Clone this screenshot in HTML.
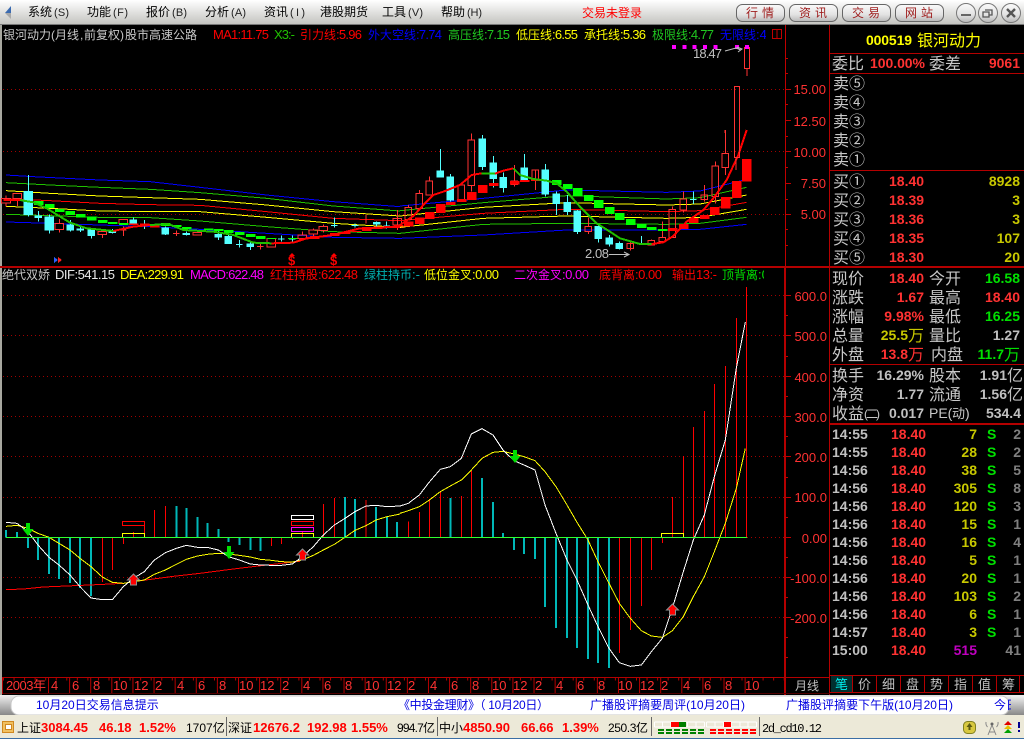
<!DOCTYPE html>
<html><head><meta charset="utf-8"><style>
html,body{margin:0;padding:0;background:#000;width:1024px;height:739px;overflow:hidden}
svg{display:block}
text{font-family:"Liberation Sans","WenQuanYi Zen Hei","Noto Sans CJK SC",sans-serif;font-size:13px;white-space:pre}
.b{font-weight:bold;font-size:14px}
.c{font-size:16px;fill:#c8c8c8}
.e{text-anchor:end}
.m{font-size:12px;fill:#000}
.n{font-size:11px;fill:#222}
.t{font-size:13px;fill:#ff3232}
.a{font-size:13px;fill:#ff3232;text-anchor:end}
.u{font-size:12px;fill:#0000e0}
.h{font-size:12px}
.r{fill:#ff3232}.g{fill:#00e000}.y{fill:#c8c800}.w{fill:#c0c0c0}.k{fill:#808080}
.q{fill:#f00;font-weight:bold;font-size:13px}
.s{font-size:12px;fill:#000}
.d{stroke:#a00000;stroke-dasharray:1 3;stroke-width:1}
</style></head><body>
<svg width="1024" height="739" viewBox="0 0 1024 739" xmlns="http://www.w3.org/2000/svg">
<defs>
<linearGradient id="mb" x1="0" y1="0" x2="0" y2="1"><stop offset="0" stop-color="#fff"/><stop offset="1" stop-color="#c4c4c0"/></linearGradient>
<linearGradient id="bt" x1="0" y1="0" x2="0" y2="1"><stop offset="0" stop-color="#fafafa"/><stop offset=".6" stop-color="#e2e2e2"/><stop offset="1" stop-color="#b8b8b8"/></linearGradient>
<linearGradient id="lg" x1="0" y1="0" x2="0" y2="1"><stop offset="0" stop-color="#f0f0f0"/><stop offset="1" stop-color="#888"/></linearGradient>
<clipPath id="cm"><rect x="0" y="25" width="785" height="242"/></clipPath>
<clipPath id="c1"><rect x="0" y="25" width="766" height="20"/></clipPath>
<clipPath id="c2"><rect x="0" y="267" width="764" height="16"/></clipPath>
<clipPath id="cl"><rect x="0" y="268" width="785" height="409"/></clipPath>
</defs>
<rect width="1024" height="739" fill="#000"/>

<!-- menu bar -->
<rect width="1024" height="24" fill="url(#mb)"/>
<rect y="24" width="1024" height="1" fill="#777"/>
<path d="M11 6L5 13L11 13Z" fill="#3a6ab0"/><path d="M5 13L11 19L11 13Z" fill="#a8a8a8"/>
<text class="m" x="28" y="16">系统</text><text class="n" x="54" y="16" textLength="15">(S)</text>
<text class="m" x="87" y="16">功能</text><text class="n" x="113" y="16" textLength="15">(F)</text>
<text class="m" x="146" y="16">报价</text><text class="n" x="172" y="16" textLength="15">(B)</text>
<text class="m" x="205" y="16">分析</text><text class="n" x="231" y="16" textLength="15">(A)</text>
<text class="m" x="264" y="16">资讯</text><text class="n" x="290" y="16" textLength="15">(I)</text>
<text class="m" x="320" y="16">港股期货</text>
<text class="m" x="382" y="16">工具</text><text class="n" x="408" y="16" textLength="15">(V)</text>
<text class="m" x="441" y="16">帮助</text><text class="n" x="467" y="16" textLength="15">(H)</text>
<text x="582" y="17" style="font-size:12px;fill:#f00">交易未登录</text>
<g fill="url(#bt)" stroke="#666">
<rect x="736.5" y="4.5" width="48" height="17" rx="6"/>
<rect x="789.5" y="4.5" width="48" height="17" rx="6"/>
<rect x="842.5" y="4.5" width="48" height="17" rx="6"/>
<rect x="895.5" y="4.5" width="48" height="17" rx="6"/>
</g>
<text x="746" y="17" style="font-size:12px;fill:#a02020" textLength="28">行情</text>
<text x="799" y="17" style="font-size:12px;fill:#a02020" textLength="28">资讯</text>
<text x="852" y="17" style="font-size:12px;fill:#a02020" textLength="28">交易</text>
<text x="905" y="17" style="font-size:12px;fill:#a02020" textLength="28">网站</text>
<g fill="url(#bt)" stroke="#777">
<circle cx="966" cy="13" r="9.5"/><circle cx="988" cy="13" r="9.5"/><circle cx="1011" cy="13" r="9.5"/>
</g>
<rect x="961" y="14" width="10" height="2" fill="#666"/>
<path d="M985 10h7v5h-3M983 12h6v5h-6z" fill="none" stroke="#555" stroke-width="1.3"/>
<path d="M1007 9l8 8M1015 9l-8 8" stroke="#555" stroke-width="2.4"/>

<!-- left edge -->
<rect x="0" y="25" width="2" height="670" fill="#a8a8a0"/>

<!-- legend -->
<g clip-path="url(#c1)">
<text class="h" x="3" y="39" style="fill:#c8c8c8">银河动力</text>
<text x="51" y="39" style="fill:#c8c8c8;font-size:12px">(</text><text class="h" x="55" y="39" style="fill:#c8c8c8">月线</text><text x="80" y="39" style="fill:#c8c8c8;font-size:12px">,</text><text class="h" x="84" y="39" style="fill:#c8c8c8">前复权</text><text x="120" y="39" style="fill:#c8c8c8;font-size:12px">)</text><text class="h" x="125" y="39" style="fill:#c8c8c8">股市高速公路</text>
<text x="213" y="39" fill="#f00" textLength="56">MA1:11.75</text>
<text x="274" y="39" fill="#20c000" textLength="21">X3:-</text>
<text class="h" x="300" y="39" fill="#f00">引力线</text><text x="336" y="39" fill="#f00" textLength="26">:5.96</text>
<text class="h" x="368" y="39" fill="#0000ff">外大空线</text><text x="416" y="39" fill="#0000ff" textLength="26">:7.74</text>
<text class="h" x="448" y="39" fill="#20c820">高压线</text><text x="484" y="39" fill="#20c820" textLength="26">:7.15</text>
<text class="h" x="516" y="39" fill="#ff0">低压线</text><text x="552" y="39" fill="#ff0" textLength="26">:6.55</text>
<text class="h" x="584" y="39" fill="#ff0">承托线</text><text x="620" y="39" fill="#ff0" textLength="26">:5.36</text>
<text class="h" x="652" y="39" fill="#20c820">极限线</text><text x="688" y="39" fill="#20c820" textLength="26">:4.77</text>
<text class="h" x="720" y="39" fill="#0000ff">无限线</text><text x="756" y="39" fill="#0000ff">:4</text>
</g>
<path d="M772.5 29.5h9v9h-9zM777 30v8" fill="none" stroke="#c00000"/>

<!-- axis lines main -->
<line class="d" x1="3" y1="89.5" x2="785" y2="89.5"/>
<line class="d" x1="3" y1="151.5" x2="785" y2="151.5"/>
<line class="d" x1="3" y1="214.5" x2="785" y2="214.5"/>
<path d="M785 89.5h6M785 120.5h6M785 151.5h6M785 183.5h6M785 214.5h6M785 104.5h3M785 136.5h3M785 167.5h3M785 199.5h3M785 229.5h3M785 245.5h3M785 73.5h3M785 58.5h3" stroke="#c00000" fill="none"/>
<text class="a" x="826" y="94">15.00</text>
<text class="a" x="826" y="126">12.50</text>
<text class="a" x="826" y="157">10.00</text>
<text class="a" x="826" y="188">7.50</text>
<text class="a" x="826" y="219">5.00</text>

<g clip-path="url(#cm)" shape-rendering="crispEdges">
<g transform="translate(0,130) scale(.33333)" fill="none" stroke-width="3">
<polyline stroke="#0000ff" points="18,135 100,140 300,150 450,155 600,172 800,195 1000,215 1200,230"/>
<polyline stroke="#20c000" points="18,158 150,165 300,172 450,178 600,188 800,205 1000,228 1200,243"/>
<polyline stroke="#ffff00" points="18,182 150,190 300,198 450,203 600,208 800,225 1000,245 1200,258"/>
<polyline stroke="#ff0000" points="18,206 150,212 300,220 450,224 600,226 800,245 1000,265 1200,272"/>
<polyline stroke="#ffff00" points="18,229 150,235 300,243 450,245 600,245 800,262 1000,280 1200,292"/>
<polyline stroke="#20c000" points="18,253 150,257 300,262 450,263 600,273 800,290 1000,305 1200,310"/>
<polyline stroke="#0000ff" points="18,276 150,280 300,285 450,290 600,298 800,310 1000,322 1200,325"/>
<path fill="#54ffff" stroke="#54ffff" d="M72 185H98V253H72ZM85 135V260M105 258H125V263H105ZM115 243V275M135 261H161V300H135ZM148 253V311M201 285H221V300H201ZM211 270V305M231 297H251V300H231ZM241 290V306M264 300H284V317H264ZM274 295V326M327 305H347V307H327ZM337 297V311M390 270H410V279H390ZM400 262V285M423 284H443M433 270V297M486 294H506V312H486ZM496 290V315M549 310H569V313H549ZM559 305V316M645 313H665V321H645ZM655 300V330M675 320H695V341H675ZM685 310V342M708 343H728M718 330V352M741 342H761V350H741ZM751 335V360M834 327H854M844 316V335M867 327H887M877 316V335M993 287H1013M1003 262V292M1055 287H1075M1065 280V292M1120 277H1140V282H1120ZM1130 274V290M1150 288H1170M1160 275V296"/>
<path stroke="#ff3232" d="M5 205H31V219H5ZM18 197V205M18 219V229M39 190H65V205H39ZM52 205V228M165 281H191V299H165ZM178 267V281M178 299V307M294 305H320V314H294ZM307 314V324M357 268H383V281H357ZM360 300H380M370 290V318M519 310H539M529 302V318M579 307H605V315H579ZM771 349H791M781 340V358M801 325H827V351H801ZM894 315H920V326H894ZM907 305V315M927 300H953V312H927ZM940 295V300M940 312V318M957 289H983V301H957ZM970 283V289M970 301V308M1098 255V280M1179 265H1205V285H1179ZM1192 240V300"/>
<path fill="#00ff00" stroke="none" d="M102 213H130V225H102ZM135 222H163V234H135ZM165 237H193V246H165ZM197 243H225V255H197ZM228 252H256V262H228ZM261 259H289V272H261ZM294 270H322V279H294ZM324 276H352V282H324ZM357 279H385V285H357ZM483 279H511V288H483ZM516 285H544V291H516ZM546 291H574V297H546ZM612 295H640V300H612ZM642 297H670V303H642ZM672 300H700V309H672ZM705 306H733V315H705ZM738 312H766V321H738ZM768 318H796V327H768ZM801 324H829V327H801ZM864 324H892V327H864Z"/>
<path fill="#ff0000" stroke="none" d="M834 336H862V341H834ZM897 325H925V329H897ZM930 318H958V327H930ZM990 309H1018V318H990ZM1023 306H1051V312H1023ZM1056 303H1084V306H1056ZM1086 297H1114V303H1086ZM1119 291H1147V297H1119ZM1152 288H1180V294H1152ZM1182 285H1210V294H1182ZM387 280H415V285H387ZM420 281H448V285H420ZM450 285H478V293H450Z"/>
<polyline stroke="#ff0000" stroke-width="6" points="10,210 60,210"/>
<polyline stroke="#20c000" stroke-width="6" points="60,210 100,217 140,235 210,278 260,295 340,303"/>
<polyline stroke="#ff0000" stroke-width="6" points="340,303 400,290 450,285"/>
<polyline stroke="#20c000" stroke-width="6" points="450,285 505,282 550,300 640,305 700,315 760,338 815,340"/>
<polyline stroke="#ff0000" stroke-width="6" points="815,340 880,338 920,325 1000,315 1080,295 1200,290"/>
</g>
<g transform="translate(400,130) scale(.33333)" fill="none" stroke-width="3">
<polyline stroke="#0000ff" points="0,228 250,205 500,180 800,187 900,183 1040,148"/>
<polyline stroke="#20c000" points="0,242 250,218 500,197 800,207 900,203 1040,172"/>
<polyline stroke="#ffff00" points="0,258 250,232 500,218 800,225 900,222 1040,195"/>
<polyline stroke="#ff0000" points="0,272 250,250 500,238 800,245 900,242 1040,217"/>
<polyline stroke="#ffff00" points="0,292 250,265 500,258 800,265 900,262 1040,238"/>
<polyline stroke="#20c000" points="0,310 250,283 500,280 800,283 900,280 1040,262"/>
<polyline stroke="#0000ff" points="0,325 250,315 500,300 800,300 900,298 1040,283"/>
<path fill="#54ffff" stroke="#54ffff" d="M111 123H131V141H111ZM121 57V141M141 141H161V210H141ZM151 132V215M237 27H257V110H237ZM247 15V120M270 99H290V145H270ZM280 78V172M300 142H320V172H300ZM310 128V188M363 114H383V150H363ZM373 72V155M426 120H446V192H426ZM436 102V200M459 192H479V220H459ZM469 185V255M492 217H512V245H492ZM502 195V255M522 243H542V305H522ZM532 240V312M585 289H605V326H585ZM595 286V338M618 324H638V342H618ZM628 315V350M648 340H668V356H648ZM658 335V358M714 342H734M724 318V345M870 208H890M880 185V222"/>
<path stroke="#ff3232" d="M15 232H35V268H15ZM25 225V232M48 190H68V236H48ZM58 180V190M78 153H98V195H78ZM88 139V153M174 165H194V210H174ZM204 30H224V167H204ZM214 10V30M214 167V185M333 153H353V163H333ZM343 105V153M343 163V170M396 120H416V150H396ZM406 118V180M555 289H575V305H555ZM565 262V289M565 305V312M681 340H701V355H681ZM691 335V362M744 331H764V345H744ZM754 328V331M777 323H797V335H777ZM787 275V323M807 238H827V323H807ZM817 230V238M840 207H860V240H840ZM850 185V207M850 240V248M903 195H923V208H903ZM913 165V215M936 108H956V200H936ZM946 95V108M946 200V220M966 70H986V113H966ZM976 0V70M976 113V135"/>
<path fill="#ff0000" stroke="none" d="M12 275H40V290H12ZM45 262H73V282H45ZM75 246H103V267H75ZM108 222H136V249H108ZM138 216H166V225H138ZM171 207H199V216H171ZM201 186H229V210H201ZM234 165H262V189H234ZM267 159H295V168H267ZM330 153H358V163H330ZM360 150H388V156H360ZM393 147H421V153H393ZM804 294H832V303H804ZM837 282H865V297H837ZM867 264H895V279H867ZM900 255H928V267H900ZM930 231H958V255H930ZM963 201H991V236H963ZM996 153H1024V204H996ZM1026 87H1054V155H1026Z"/>
<path fill="#00ff00" stroke="none" d="M456 150H484V165H456ZM489 162H517V177H489ZM519 174H547V198H519ZM552 195H580V213H552ZM582 210H610V234H582ZM615 231H643V252H615ZM645 249H673V270H645ZM678 267H706V285H678ZM711 282H739V294H711ZM741 291H769V300H741ZM774 297H802V303H774Z"/>
<polyline stroke="#ff0000" stroke-width="6" points="0,285 40,258 70,225 100,195 130,185 180,165 215,135 245,130"/>
<polyline stroke="#20c000" stroke-width="6" points="245,131 285,131"/>
<polyline stroke="#ff0000" stroke-width="6" points="285,131 310,122 340,115"/>
<polyline stroke="#20c000" stroke-width="6" points="340,115 360,135 400,147 440,152 470,160 500,185 540,230 590,280 630,305 660,325 720,342 755,342"/>
<polyline stroke="#ff0000" stroke-width="6" points="755,342 790,337 820,318 860,275 910,240 940,205 980,150 1015,75 1040,0"/>
</g>
<path d="M744.5 47.5h5v21h-5zM747 68v8M734.5 86.5h5v71h-5zM736.5 45v2" fill="none" stroke="#ff3232"/>
<path d="M725 130V133M736 157V170" stroke="#ff3232"/>
<path d="M672 45h4v4h-4zM682.500 45h4v4h-4zM692.500 45h4v4h-4zM703 45h4v4h-4zM713.500 45h4v4h-4zM735 45h4v4h-4zM745 45h4v4h-4z" fill="#ff00ff"/>
<path d="M54 257l4 3-4 3zM58 257l4 3-4 3z" fill="#2a60ff"/><path d="M58 257l4 3-4 3z" fill="#ff2020"/>
</g>
<path d="M725 51L736 48L741 50M737 47l5 2-4 3" stroke="#c0c0c0" fill="none"/>
<text x="693" y="58" style="font-size:13px;fill:#c0c0c0" textLength="29">18.47</text>
<path d="M609 254.5H628M624 252l5 2.500-5 2.500" stroke="#c0c0c0" fill="none"/>
<text x="585" y="258" style="font-size:13px;fill:#c0c0c0" textLength="24">2.08</text>
<text x="288" y="265" style="font-size:13px;font-weight:bold;fill:#f00">$</text>
<text x="330" y="265" style="font-size:13px;font-weight:bold;fill:#f00">$</text>
<path d="M289 256l3-3 3 3zM331 256l3-3 3 3z" fill="#f00"/>

<!-- lower pane legend -->
<rect x="0" y="266" width="1024" height="2" fill="#b40000"/>
<g clip-path="url(#c2)">
<text class="h" x="2" y="279" style="fill:#c8c8c8">绝代双娇</text>
<text x="55" y="279" fill="#e8e8e8" textLength="60">DIF:541.15</text>
<text x="120" y="279" fill="#ff0" textLength="64">DEA:229.91</text>
<text x="190" y="279" fill="#ff00ff" textLength="74">MACD:622.48</text>
<text class="h" x="270" y="279" fill="#f00">红柱持股</text><text x="318" y="279" fill="#f00" textLength="40">:622.48</text>
<text class="h" x="364" y="279" fill="#00b0b0">绿柱持币</text><text x="412" y="279" fill="#00b0b0">:-</text>
<text class="h" x="424" y="279" fill="#ff0">低位金叉</text><text x="472" y="279" fill="#ff0" textLength="27">:0.00</text>
<text class="h" x="514" y="279" fill="#ff00ff">二次金叉</text><text x="562" y="279" fill="#ff00ff" textLength="27">:0.00</text>
<text class="h" x="599" y="279" fill="#f00">底背离</text><text x="635" y="279" fill="#f00" textLength="27">:0.00</text>
<text class="h" x="672" y="279" fill="#f00">输出</text><text x="696" y="279" fill="#f00" textLength="21">13:-</text>
<text class="h" x="722" y="279" fill="#00e000">顶背离</text><text x="758" y="279" fill="#00e000">:0.</text>
</g>

<!-- lower dotted -->
<line class="d" x1="3" y1="295.5" x2="785" y2="295.5"/>
<line class="d" x1="3" y1="335.5" x2="785" y2="335.5"/>
<line class="d" x1="3" y1="376.5" x2="785" y2="376.5"/>
<line class="d" x1="3" y1="416.5" x2="785" y2="416.5"/>
<line class="d" x1="3" y1="456.5" x2="785" y2="456.5"/>
<line class="d" x1="3" y1="497.5" x2="785" y2="497.5"/>
<line class="d" x1="747" y1="537.5" x2="785" y2="537.5"/>
<line class="d" x1="3" y1="577.5" x2="785" y2="577.5"/>
<line class="d" x1="3" y1="617.5" x2="785" y2="617.5"/>
<path d="M785 295.5h6M785 335.5h6M785 376.5h6M785 416.5h6M785 456.5h6M785 497.5h6M785 537.5h6M785 577.5h6M785 617.5h6M785 315.5h3M785 356.5h3M785 396.5h3M785 436.5h3M785 477.5h3M785 517.5h3M785 557.5h3M785 597.5h3M785 637.5h3M785 657.5h3" stroke="#c00000"/>
<text class="a" x="827" y="301">600.0</text>
<text class="a" x="827" y="341">500.0</text>
<text class="a" x="827" y="382">400.0</text>
<text class="a" x="827" y="422">300.0</text>
<text class="a" x="827" y="462">200.0</text>
<text class="a" x="827" y="502">100.0</text>
<text class="a" x="827" y="543">0.00</text>
<text class="a" x="827" y="583">-100.0</text>
<text class="a" x="827" y="623">-200.0</text>

<g clip-path="url(#cl)" shape-rendering="crispEdges">
<g transform="translate(0,440) scale(.33333)" fill="none">
<path stroke="#00b8b8" stroke-width="6" d="M18 292V270M51 292V276M84 292V324M114 292V360M147 292V402M177 292V417M210 292V429M240 292V444M273 292V468M529 292V198M559 292V204M592 292V231M622 292V249M655 292V267M685 292V306M718 292V315M751 292V330M781 292V333M1035 292V171M1065 292V177M1128 292V201M1161 292V231M1191 292V246"/>
<path stroke="#ff0000" stroke-width="3" d="M307 292V426M337 292V390M370 292V312M400 292V276M463 292V210M496 292V198M814 292V318M844 292V312M877 292V297M907 292V276M970 292V192M1003 292V174M1098 292V180"/>
<path stroke="#ff0000" stroke-width="3" d="M367 244.5H433V256.5H367ZM433 256V292"/>
<path stroke="#ffff00" stroke-width="3" d="M367 292V280H433V292M874 292V280H941V292"/>
<path stroke="#ffffff" stroke-width="3" d="M874 226H941V238H874Z"/>
<path stroke="#ff0000" stroke-width="3" d="M874 244H941V256H874Z"/>
<path stroke="#ff00ff" stroke-width="3" d="M874 262H941V274H874Z"/>
<polyline stroke="#ff0000" stroke-width="3" points="18,449 70,447 130,441 200,438 290,434 370,430 430,421 520,409 600,400 700,387 800,375 900,364"/>
<polyline stroke="#ffff00" stroke-width="3" points="18,259 51,256 84,265 114,280 147,292 177,310 210,330 240,355 273,380 307,411 337,427 370,430 400,425 433,420 463,403 496,390 529,373 559,358 592,348 622,343 655,340 685,342 718,346 751,351 781,358 814,361 844,365 877,366 907,360 940,346 970,330 1003,313 1035,292 1065,271 1098,257 1128,240 1161,230 1200,222"/>
<polyline stroke="#ffffff" stroke-width="3" points="18,247 51,250 84,275 114,315 147,352 177,375 210,405 240,440 273,474 307,479 337,479 370,440 400,415 433,395 463,360 496,338 529,325 559,316 592,322 622,322 655,330 685,350 718,360 751,372 781,375 814,376 844,376 877,372 907,350 940,320 970,285 1003,255 1035,235 1065,215 1098,198 1128,196 1161,200 1200,198"/>
</g>
<g transform="translate(400,420) scale(.33333)" fill="none">
<path stroke="#00b8b8" stroke-width="6" d="M151 352V234M246 352V174M279 352V246M309 352V339M342 352V390M372 352V402M405 352V417M435 352V561M468 352V624M501 352V654M531 352V684M564 352V717M594 352V729M627 352V744"/>
<path stroke="#ff0000" stroke-width="3" d="M25 352V304M58 352V276M88 352V237M121 352V213M184 352V228M214 352V153M658 352V699M691 352V630M724 352V558M754 352V450M787 352V369M817 352V231M850 352V108M880 352V21M913 352V-27M943 352V-108M976 352V-162M1009 352V-306M1039 352V-399"/>
<path stroke="#ffff00" stroke-width="3" d="M784 352V340H850V352"/>
<polyline stroke="#ffff00" stroke-width="3" points="0,280 25,272 58,260 88,240 121,215 151,198 184,180 214,150 246,115 279,97 309,94 342,102 372,110 405,122 435,155 468,200 501,255 531,307 564,360 594,425 627,490 658,550 691,595 724,632 754,648 787,652 817,632 850,590 880,530 913,470 943,395 976,310 1009,205 1036,85"/>
<polyline stroke="#ffffff" stroke-width="3" points="0,258 25,250 58,225 88,186 121,148 151,140 184,115 214,42 246,26 279,45 309,90 342,122 372,135 405,150 435,255 468,340 501,420 531,480 564,555 594,620 627,685 658,728 691,739 724,735 754,695 787,655 817,565 850,455 880,360 913,285 943,170 976,60 1009,-156 1036,-294"/>
</g>
<rect x="6" y="537" width="741" height="1" fill="#30ff30"/>
</g>
<!-- arrows -->
<path d="M26 523h4v6h3.500l-5.500 7-5.500-7h3.500z" fill="#00e000"/>
<path d="M227 546h4v6h3.500l-5.500 7-5.500-7h3.500z" fill="#00e000"/>
<path d="M513 450h4v6h3.500l-5.500 7-5.500-7h3.500z" fill="#00e000"/>
<path d="M133.500 574l6 6h-3v5h-6v-5h-3z" fill="#f00" stroke="#909090"/>
<path d="M302.500 549l6 6h-3v5h-6v-5h-3z" fill="#f00" stroke="#909090"/>
<path d="M672.500 604l6 6h-3v5h-6v-5h-3z" fill="#f00" stroke="#909090"/>

<!-- axes frames -->
<rect x="785" y="25" width="1" height="241" fill="#c00000"/>
<rect x="784" y="266" width="2" height="429" fill="#b40000"/>
<rect x="829" y="25" width="1" height="670" fill="#b40000"/>
<rect x="2" y="677" width="828" height="1" fill="#b40000"/>
<rect x="2" y="693" width="828" height="1" fill="#500000"/>
<line x1="3" y1="679" x2="785" y2="679" stroke="#b40000" stroke-width="3" stroke-dasharray="1 9.55"/>
<line x1="48" y1="685" x2="746" y2="685" stroke="#b40000" stroke-width="16" stroke-dasharray="1 20.11"/>
<rect x="2" y="677" width="1" height="17" fill="#b40000"/>
<text class="t" x="6" y="690" textLength="40">2003年</text>
<text class="t" x="51" y="690">4</text><text class="t" x="72" y="690">6</text><text class="t" x="93" y="690">8</text><text class="t" x="113" y="690">10</text><text class="t" x="134" y="690">12</text>
<text class="t" x="155" y="690">2</text><text class="t" x="177" y="690">4</text><text class="t" x="198" y="690">6</text><text class="t" x="219" y="690">8</text><text class="t" x="239" y="690">10</text><text class="t" x="260" y="690">12</text>
<text class="t" x="282" y="690">2</text><text class="t" x="303" y="690">4</text><text class="t" x="324" y="690">6</text><text class="t" x="345" y="690">8</text><text class="t" x="365" y="690">10</text><text class="t" x="387" y="690">12</text>
<text class="t" x="408" y="690">2</text><text class="t" x="430" y="690">4</text><text class="t" x="451" y="690">6</text><text class="t" x="472" y="690">8</text><text class="t" x="492" y="690">10</text><text class="t" x="513" y="690">12</text>
<text class="t" x="535" y="690">2</text><text class="t" x="556" y="690">4</text><text class="t" x="577" y="690">6</text><text class="t" x="598" y="690">8</text><text class="t" x="618" y="690">10</text><text class="t" x="640" y="690">12</text>
<text class="t" x="661" y="690">2</text><text class="t" x="683" y="690">4</text><text class="t" x="704" y="690">6</text><text class="t" x="725" y="690">8</text><text class="t" x="745" y="690">10</text>
<text x="795" y="690" style="font-size:12px;fill:#c0c0c0">月线</text>

<!-- right panel -->
<text x="866" y="45" style="font-size:14px;font-weight:bold;fill:#ff0" textLength="46">000519</text>
<text x="917" y="46" style="font-size:16px;fill:#ff0">银河动力</text>
<rect x="830" y="53" width="194" height="1" fill="#b40000"/>
<text class="c" x="832" y="69">委比</text>
<text class="b" style="fill:#ff3232" x="870" y="68" textLength="55">100.00%</text>
<text class="c" x="929" y="69">委差</text>
<text class="b e" style="fill:#ff3232" x="1020" y="68">9061</text>
<rect x="830" y="73" width="194" height="1" fill="#b40000"/>
<text class="c" x="833" y="89">卖⑤</text><text class="c" x="833" y="108">卖④</text><text class="c" x="833" y="127">卖③</text><text class="c" x="833" y="146">卖②</text><text class="c" x="833" y="165">卖①</text>
<rect x="830" y="170" width="194" height="1" fill="#b40000"/>
<text class="c" x="833" y="187">买①</text><text class="c" x="833" y="206">买②</text><text class="c" x="833" y="225">买③</text><text class="c" x="833" y="244">买④</text><text class="c" x="833" y="263">买⑤</text>
<text class="b r" x="889" y="186">18.40</text><text class="b r" x="889" y="205">18.39</text><text class="b r" x="889" y="224">18.36</text><text class="b r" x="889" y="243">18.35</text><text class="b r" x="889" y="262">18.30</text>
<text x="1020" y="186" class="b y e">8928</text><text x="1020" y="205" class="b y e">3</text><text x="1020" y="224" class="b y e">3</text><text x="1020" y="243" class="b y e">107</text><text x="1020" y="262" class="b y e">20</text>

<text class="c" x="832" y="284">现价</text><text class="b r e" x="924" y="283">18.40</text><text class="c" x="929" y="284">今开</text><text class="b g e" x="1020" y="283">16.58</text>
<text class="c" x="832" y="303">涨跌</text><text class="b r e" x="924" y="302">1.67</text><text class="c" x="929" y="303">最高</text><text class="b r e" x="1020" y="302">18.40</text>
<text class="c" x="832" y="322">涨幅</text><text class="b r e" x="924" y="321">9.98%</text><text class="c" x="929" y="322">最低</text><text class="b g e" x="1020" y="321">16.25</text>
<text class="c" x="832" y="341">总量</text><text class="b y e" x="908" y="340">25.5</text><text x="908" y="341" style="font-size:16px;fill:#c8c800">万</text><text class="c" x="929" y="341">量比</text><text class="b w e" x="1020" y="340">1.27</text>
<text class="c" x="832" y="360">外盘</text><text class="b r e" x="908" y="359">13.8</text><text x="908" y="360" style="font-size:16px;fill:#ff3232">万</text><text class="c" x="931" y="360">内盘</text><text class="b g e" x="1004" y="359">11.7</text><text x="1004" y="360" style="font-size:16px;fill:#00e000">万</text>
<rect x="830" y="364" width="194" height="1" fill="#b40000"/>
<text class="c" x="832" y="381">换手</text><text class="b w e" x="924" y="380">16.29%</text><text class="c" x="929" y="381">股本</text><text class="b w e" x="1007" y="380">1.91</text><text x="1007" y="381" style="font-size:16px;fill:#c0c0c0">亿</text>
<text class="c" x="832" y="400">净资</text><text class="b w e" x="924" y="399">1.77</text><text class="c" x="929" y="400">流通</text><text class="b w e" x="1007" y="399">1.56</text><text x="1007" y="400" style="font-size:16px;fill:#c0c0c0">亿</text>
<text class="c" x="832" y="419">收益</text><text class="h" x="864" y="418" style="fill:#c8c8c8" textLength="16">(二)</text><text class="b w e" x="924" y="418">0.017</text>
<text class="c" style="font-size:14px" x="929" y="418">PE(</text><text class="c" style="font-size:13px" x="952" y="418">动</text><text class="c" style="font-size:14px" x="965" y="418">)</text><text class="b w e" x="1021" y="418">534.4</text>
<rect x="830" y="423" width="194" height="2" fill="#b40000"/>

<g class="b w" style="font-weight:bold">
<text class="b w" x="832" y="439">14:55</text><text class="b w" x="832" y="457">14:55</text><text class="b w" x="832" y="475">14:56</text><text class="b w" x="832" y="493">14:56</text><text class="b w" x="832" y="511">14:56</text><text class="b w" x="832" y="529">14:56</text><text class="b w" x="832" y="547">14:56</text><text class="b w" x="832" y="565">14:56</text><text class="b w" x="832" y="583">14:56</text><text class="b w" x="832" y="601">14:56</text><text class="b w" x="832" y="619">14:56</text><text class="b w" x="832" y="637">14:57</text><text class="b w" x="832" y="655">15:00</text>
</g>
<text class="b r" x="891" y="439">18.40</text><text class="b r" x="891" y="457">18.40</text><text class="b r" x="891" y="475">18.40</text><text class="b r" x="891" y="493">18.40</text><text class="b r" x="891" y="511">18.40</text><text class="b r" x="891" y="529">18.40</text><text class="b r" x="891" y="547">18.40</text><text class="b r" x="891" y="565">18.40</text><text class="b r" x="891" y="583">18.40</text><text class="b r" x="891" y="601">18.40</text><text class="b r" x="891" y="619">18.40</text><text class="b r" x="891" y="637">18.40</text><text class="b r" x="891" y="655">18.40</text>
<text class="b y e" x="977" y="439">7</text><text class="b y e" x="977" y="457">28</text><text class="b y e" x="977" y="475">38</text><text class="b y e" x="977" y="493">305</text><text class="b y e" x="977" y="511">120</text><text class="b y e" x="977" y="529">15</text><text class="b y e" x="977" y="547">16</text><text class="b y e" x="977" y="565">5</text><text class="b y e" x="977" y="583">20</text><text class="b y e" x="977" y="601">103</text><text class="b y e" x="977" y="619">6</text><text class="b y e" x="977" y="637">3</text>
<text class="b e" fill="#c000c0" x="977" y="655">515</text>
<text class="b g" x="987" y="439">S</text><text class="b g" x="987" y="457">S</text><text class="b g" x="987" y="475">S</text><text class="b g" x="987" y="493">S</text><text class="b g" x="987" y="511">S</text><text class="b g" x="987" y="529">S</text><text class="b g" x="987" y="547">S</text><text class="b g" x="987" y="565">S</text><text class="b g" x="987" y="583">S</text><text class="b g" x="987" y="601">S</text><text class="b g" x="987" y="619">S</text><text class="b g" x="987" y="637">S</text>
<text class="b k e" x="1021" y="439">2</text><text class="b k e" x="1021" y="457">2</text><text class="b k e" x="1021" y="475">5</text><text class="b k e" x="1021" y="493">8</text><text class="b k e" x="1021" y="511">3</text><text class="b k e" x="1021" y="529">1</text><text class="b k e" x="1021" y="547">4</text><text class="b k e" x="1021" y="565">1</text><text class="b k e" x="1021" y="583">1</text><text class="b k e" x="1021" y="601">2</text><text class="b k e" x="1021" y="619">1</text><text class="b k e" x="1021" y="637">1</text><text class="b k e" x="1021" y="655">41</text>

<!-- tabs -->
<rect x="831" y="676" width="21" height="16" fill="#003030"/>
<path d="M830 675.500H1024M830 692.500H1024M852.500 675V693M876.500 675V693M900.500 675V693M924.500 675V693M948.500 675V693M972.500 675V693M996.500 675V693M1019.500 675V693" stroke="#b40000" fill="none"/>
<text x="835" y="689" style="font-size:13px;fill:#00f0f0">笔</text>
<text x="858" y="689" style="font-size:13px;fill:#c0c0c0">价</text>
<text x="882" y="689" style="font-size:13px;fill:#c0c0c0">细</text>
<text x="906" y="689" style="font-size:13px;fill:#c0c0c0">盘</text>
<text x="930" y="689" style="font-size:13px;fill:#c0c0c0">势</text>
<text x="954" y="689" style="font-size:13px;fill:#c0c0c0">指</text>
<text x="978" y="689" style="font-size:13px;fill:#c0c0c0">值</text>
<text x="1002" y="689" style="font-size:13px;fill:#c0c0c0">筹</text>

<!-- ticker -->
<rect x="0" y="695" width="1024" height="20" fill="url(#lg)"/>
<rect x="11" y="696" width="998" height="19" rx="8" fill="#fff" stroke="#c8c8c8"/>
<text class="u" x="36" y="709">10月20日交易信息提示</text>
<text class="u" x="398" y="709" textLength="151">《中投金理财》（ 10月20日）</text>
<text class="u" x="590" y="709" textLength="155">广播股评摘要周评(10月20日)</text>
<text class="u" x="786" y="709" textLength="167">广播股评摘要下午版(10月20日)</text>
<text class="u" x="994" y="709">今日</text>
<rect x="1011" y="696" width="13" height="19" fill="url(#lg)"/>

<!-- status bar -->
<rect x="0" y="715" width="1024" height="23" fill="#ece9d8"/>
<rect x="0" y="738" width="1024" height="1" fill="#3a6ea5"/>
<rect x="2.500" y="721.500" width="11" height="11" fill="#f0c060" stroke="#d08820"/>
<rect x="5.500" y="724.500" width="6" height="5" fill="#fff" stroke="#d08820"/>
<text class="s" x="17" y="732">上证</text>
<text x="41" y="732" class="q">3084.45</text>
<text x="99" y="732" class="q">46.18</text>
<text x="139" y="732" class="q">1.52%</text>
<text class="s" x="186" y="732">1707亿</text>
<rect x="226" y="717" width="1" height="19" fill="#666"/>
<text class="s" x="228" y="732">深证</text>
<text x="253" y="732" class="q">12676.2</text>
<text x="307" y="732" class="q">192.98</text>
<text x="351" y="732" class="q">1.55%</text>
<text class="s" x="397" y="732" textLength="38">994.7亿</text>
<rect x="437" y="717" width="1" height="19" fill="#666"/>
<text class="s" x="439" y="732">中小</text>
<text x="463" y="732" class="q">4850.90</text>
<text x="521" y="732" class="q">66.66</text>
<text x="562" y="732" class="q">1.39%</text>
<text class="s" x="608" y="732" textLength="40">250.3亿</text>
<rect x="651" y="717" width="1" height="19" fill="#666"/>
<rect x="759" y="717" width="1" height="19" fill="#666"/>
<text x="762" y="732" style="font-family:'Liberation Mono',monospace;font-size:12px;fill:#000" textLength="60">2d_cd10.12</text>
<path d="M654.500 722h50M654.500 727h50M654.500 722v5M662.500 722v5M671 722v5M679 722v5M687.500 722v5M696 722v5M704.500 722v5M706.500 722h50M706.500 727h50M706.500 722v5M715 722v5M723.500 722v5M731 722v5M740 722v5M748 722v5M756.500 722v5" stroke="#fff" fill="none" shape-rendering="crispEdges"/>
<rect x="671" y="722" width="8" height="5" fill="#f00"/><rect x="679" y="722" width="7" height="5" fill="#008000"/><rect x="724" y="722" width="7" height="5" fill="#f00"/>
<g fill="#008000"><rect x="658" y="729" width="6" height="2"/><rect x="666" y="729" width="6" height="2"/><rect x="674" y="729" width="6" height="2"/><rect x="682" y="729" width="6" height="2"/><rect x="690" y="729" width="6" height="2"/><rect x="698" y="729" width="6" height="2"/><rect x="658" y="732" width="6" height="2"/><rect x="666" y="732" width="6" height="2"/><rect x="674" y="732" width="6" height="2"/><rect x="682" y="732" width="6" height="2"/><rect x="690" y="732" width="6" height="2"/><rect x="698" y="732" width="6" height="2"/></g>
<g fill="#f00"><rect x="710" y="729" width="6" height="2"/><rect x="718" y="729" width="6" height="2"/><rect x="726" y="729" width="6" height="2"/><rect x="734" y="729" width="6" height="2"/><rect x="742" y="729" width="6" height="2"/><rect x="750" y="729" width="6" height="2"/><rect x="710" y="732" width="6" height="2"/><rect x="718" y="732" width="6" height="2"/><rect x="726" y="732" width="6" height="2"/><rect x="734" y="732" width="6" height="2"/><rect x="742" y="732" width="6" height="2"/><rect x="750" y="732" width="6" height="2"/></g>
<rect x="963.500" y="721.500" width="12" height="12" rx="4" fill="#d8c840" stroke="#808020"/>
<path d="M969.500 723l3 4h-2v3h-2v-3h-2z" fill="#5a5a10"/>
<path d="M992 725L988 735M992 725L996 735M989.500 732h5M986 722a6 6 0 0 0 1.500 5M998 722a6 6 0 0 1-1.500 5" stroke="#888" fill="none"/>
<circle cx="992" cy="724" r="1.500" fill="#666"/>
<path d="M1008 721l4 4h-8z" fill="#e00000"/><path d="M1008 725l4 4h-8z" fill="#e8c000"/><path d="M1008 729l4 4h-8z" fill="#00a000"/>
<rect x="1018" y="722" width="2" height="6" fill="#000090"/><rect x="1018" y="730" width="2" height="2" fill="#000090"/>
</svg>
</body></html>
